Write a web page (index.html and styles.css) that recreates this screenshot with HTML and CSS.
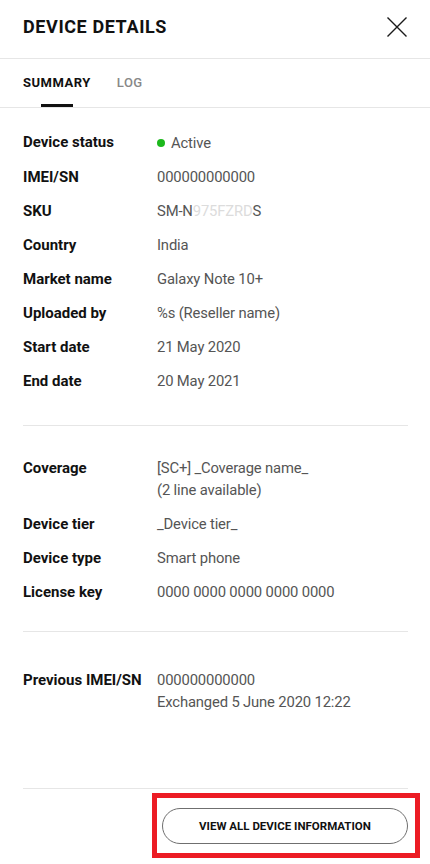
FILE: index.html
```html
<!DOCTYPE html>
<html lang="en">
<head>
<meta charset="utf-8">
<title>Device details</title>
<link rel="stylesheet" href="styles.css">
</head>
<body>
<div class="page">
  <header class="header">
    <h1 class="title">DEVICE DETAILS</h1>
    <button class="close" aria-label="Close">
      <svg width="22" height="22" viewBox="0 0 22 22"><path d="M1.5 1.5 L20.5 20.5 M20.5 1.5 L1.5 20.5" stroke="#1a1a1a" stroke-width="1.4" fill="none"/></svg>
    </button>
  </header>
  <nav class="tabs">
    <div class="tab tab-active"><span class="tab-label">SUMMARY</span><span class="tab-bar"></span></div>
    <div class="tab"><span class="tab-label">LOG</span></div>
  </nav>

  <section class="section section-1">
    <div class="row"><div class="label">Device status</div><div class="value"><span class="status"><span class="dot"></span>Active</span></div></div>
    <div class="row"><div class="label">IMEI/SN</div><div class="value">000000000000</div></div>
    <div class="row"><div class="label">SKU</div><div class="value">SM-N<span class="blur">975FZRD</span>S</div></div>
    <div class="row"><div class="label">Country</div><div class="value">India</div></div>
    <div class="row"><div class="label">Market name</div><div class="value">Galaxy Note 10+</div></div>
    <div class="row"><div class="label">Uploaded by</div><div class="value">%s (Reseller name)</div></div>
    <div class="row"><div class="label">Start date</div><div class="value">21 May 2020</div></div>
    <div class="row"><div class="label">End date</div><div class="value">20 May 2021</div></div>
  </section>

  <section class="section section-2">
    <div class="row"><div class="label">Coverage</div><div class="value">[SC+] _Coverage name_<br>(2 line available)</div></div>
    <div class="row"><div class="label">Device tier</div><div class="value">_Device tier_</div></div>
    <div class="row"><div class="label">Device type</div><div class="value">Smart phone</div></div>
    <div class="row"><div class="label">License key</div><div class="value">0000 0000 0000 0000 0000</div></div>
  </section>

  <section class="section section-3">
    <div class="row"><div class="label">Previous IMEI/SN</div><div class="value">000000000000<br>Exchanged 5 June 2020 12:22</div></div>
  </section>

  <footer class="footer">
    <button class="btn">VIEW ALL DEVICE INFORMATION</button>
    <div class="highlight"></div>
  </footer>
</div>
</body>
</html>
```

FILE: styles.css
```css
* { box-sizing: border-box; }
html, body { margin: 0; padding: 0; background: #fff; }
body { font-family: Roboto, "Liberation Sans", Arial, sans-serif; color: #111; }
.page { width: 430px; height: 864px; overflow: hidden; }

.header {
  height: 59px;
  padding: 0 22px 5px 23px;
  display: flex;
  align-items: center;
  justify-content: space-between;
  border-bottom: 1px solid #e6e6e6;
}
.title {
  margin: 0;
  font-size: 18px;
  font-weight: 700;
  letter-spacing: 0.6px;
  line-height: 22px;
  color: #111;
}
.close {
  border: 0;
  background: none;
  padding: 0;
  width: 22px;
  height: 22px;
  cursor: pointer;
}
.close svg { display: block; }

.tabs {
  height: 49px;
  padding: 0 23px;
  display: flex;
  gap: 26px;
  border-bottom: 1px solid #e6e6e6;
}
.tab {
  display: flex;
  flex-direction: column;
  align-items: center;
  padding-top: 16px;
}
.tab-label {
  font-size: 13px;
  line-height: 16px;
  font-weight: 500;
  letter-spacing: 0.5px;
  color: #888;
  flex: 1;
}
.tab-active .tab-label { color: #111; font-weight: 700; }
.tab-bar {
  width: 32px;
  height: 3px;
  background: #111;
}

.section {
  margin: 0 22px 0 23px;
  border-bottom: 1px solid #e6e6e6;
  display: flex;
  flex-direction: column;
  gap: 12px;
}
.section-1 { padding: 23px 0 33px; }
.section-2 { padding: 31px 0 28px; }
.section-3 { padding: 37px 0 75px; }

.row { display: flex; }
.label {
  width: 134px;
  flex-shrink: 0;
  font-size: 15px;
  line-height: 22px;
  font-weight: 700;
  color: #111;
}
.value {
  font-size: 14.8px;
  line-height: 22px;
  color: #555;
  letter-spacing: -0.15px;
}
.status { display: inline-flex; align-items: center; gap: 6px; }
.dot {
  width: 8px;
  height: 8px;
  border-radius: 50%;
  background: #1cb81c;
}
.blur { color: #dcdcdc; }

.footer {
  margin: 0 22px 0 23px;
  padding-top: 19px;
  display: flex;
  justify-content: flex-end;
  position: relative;
}
.btn {
  width: 246px;
  height: 36px;
  border: 1px solid #6f6f6f;
  border-radius: 18px;
  background: #fff;
  font-family: Roboto, "Liberation Sans", Arial, sans-serif;
  font-size: 11.5px;
  font-weight: 700;
  color: #111;
  padding: 0;
}
.highlight {
  position: absolute;
  left: 129px;
  top: 4px;
  width: 268px;
  height: 65px;
  border: 5px solid #ec1c24;
  pointer-events: none;
}
```
